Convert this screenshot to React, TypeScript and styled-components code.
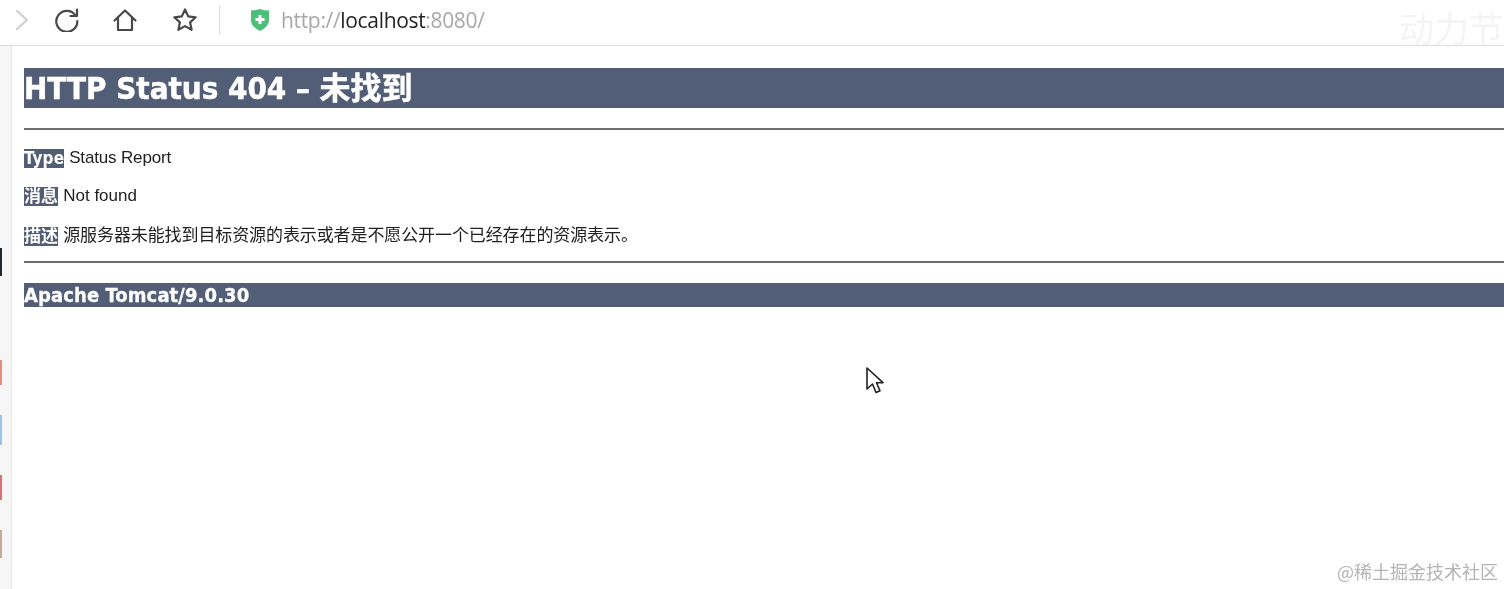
import React from 'react';
import styled, { createGlobalStyle } from 'styled-components';

const CJK = '"Noto Sans CJK SC"';
const HEADING = `"DejaVu Sans", ${CJK}, sans-serif`;

const GlobalStyle = createGlobalStyle`
  html, body {
    margin: 0;
    height: 100%;
    background: #fff;
    overflow: hidden;
  }
`;

// the reference is a video frame, everything in it is a little soft
const Page = styled.div`
  position: relative;
  display: flex;
  flex-direction: column;
  width: 1504px;
  height: 589px;
  overflow: hidden;
  filter: blur(0.4px);
`;

const Toolbar = styled.header`
  display: flex;
  align-items: center;
  flex: none;
  height: 46px;
  box-sizing: border-box;
  border-bottom: 1px solid #dcdcdc;
  padding: 0 0 6px 14px;
`;

const ToolButton = styled.span<{ $gap: number }>`
  display: flex;
  margin-right: ${(p) => p.$gap}px;
`;

const Separator = styled.span`
  width: 1px;
  height: 28px;
  margin: 0 30px 0 21px;
  background: #d8d8d8;
`;

const Url = styled.div`
  margin-left: 11px;
  font: 21px/28px "Open Sans", sans-serif;
  letter-spacing: -0.33px;
  color: #a8a8a8;
`;

const Host = styled.span`
  color: #222;
`;

const Body = styled.div`
  display: flex;
  flex: 1;
  min-height: 0;
`;

const Sidebar = styled.aside`
  display: flex;
  flex-direction: column;
  flex: none;
  width: 12px;
  box-sizing: border-box;
  padding-top: 202px;
  background: #f6f6f6;
  border-right: 1px solid #e6e6e6;
`;

const SideMark = styled.i<{ $color: string; $height: number; $gap: number }>`
  width: 2px;
  height: ${(p) => p.$height}px;
  margin-bottom: ${(p) => p.$gap}px;
  background: ${(p) => p.$color};
`;

const Main = styled.main`
  flex: 1;
  min-width: 0;
  padding: 22px 0 0 12px;
`;

const Title = styled.h1`
  margin: 0;
  height: 40px;
  background: #525d76;
  color: #fff;
  font: bold 31px/41px ${HEADING};
  font-stretch: condensed;
  -webkit-text-stroke: 0.5px #fff;
  white-space: nowrap;
`;

const Rule = styled.hr<{ $top: number; $bottom: number }>`
  height: 2px;
  margin: ${(p) => p.$top}px 0 ${(p) => p.$bottom}px;
  border: 0;
  background: #6f6f6f;
`;

const Line = styled.p<{ $bottom?: number; $spacing?: number }>`
  display: flex;
  align-items: center;
  gap: 5px;
  height: 20px;
  margin: 0 0 ${(p) => p.$bottom ?? 0}px;
  color: #222;
  font: 17px/20px "Liberation Sans", ${CJK}, sans-serif;
  letter-spacing: ${(p) => p.$spacing ?? 0}px;
  white-space: nowrap;
`;

const Tag = styled.b`
  background: #525d76;
  color: #fff;
  font: bold 17px/19px ${HEADING};
  font-stretch: condensed;
  letter-spacing: 0.1px;
`;

const Footer = styled.h3`
  margin: 0;
  height: 24px;
  background: #525d76;
  color: #fff;
  font: bold 20px/25px "DejaVu Sans", sans-serif;
  font-stretch: condensed;
  -webkit-text-stroke: 0.3px #fff;
  letter-spacing: 0.1px;
  white-space: nowrap;
`;

const Watermark = styled.div`
  position: absolute;
  right: 6px;
  bottom: 6px;
  color: #b4b4b4;
  font: 18px/24px ${CJK}, sans-serif;
`;

const CornerMark = styled.div`
  position: absolute;
  top: 7px;
  right: 0;
  color: #f4f4f4;
  font: 35px/40px ${CJK}, sans-serif;
  white-space: nowrap;
`;

const Pointer = styled.svg`
  position: absolute;
  left: 865px;
  top: 366px;
`;

const iconProps = {
  fill: 'none',
  stroke: '#484848',
  strokeWidth: 2.2,
  strokeLinecap: 'round' as const,
  strokeLinejoin: 'round' as const,
};

const marks = [
  { color: '#1d2a33', height: 28, gap: 84 },
  { color: '#e78a80', height: 25, gap: 30 },
  { color: '#9cc3e6', height: 30, gap: 30 },
  { color: '#dc6f76', height: 25, gap: 30 },
  { color: '#c9ab8f', height: 28, gap: 0 },
];

const App = () => (
  <Page>
    <GlobalStyle />
    <Toolbar>
      <ToolButton $gap={24}>
        <svg width="16" height="26" viewBox="0 0 16 26" {...iconProps} stroke="#cfcfcf">
          <path d="M3 4l10 9-10 9" />
        </svg>
      </ToolButton>
      <ToolButton $gap={33}>
        <svg width="25" height="25" viewBox="0 0 25 25" {...iconProps}>
          <path d="M21.5 8.500A10.500 10.500 0 1 0 23.300 14" />
          <path d="M23 2.500v6.500h-6.500" />
        </svg>
      </ToolButton>
      <ToolButton $gap={34}>
        <svg width="26" height="26" viewBox="0 0 26 26" {...iconProps}>
          <path d="M2.500 13.500L13 3.500l10.500 10" />
          <path d="M6 11v12h14V11" />
        </svg>
      </ToolButton>
      <ToolButton $gap={0}>
        <svg width="26" height="26" viewBox="0 0 26 26" {...iconProps}>
          <path d="M13 2.500l3.200 6.900 7.500.9-5.600 5.100 1.500 7.400L13 19.100l-6.600 3.700 1.500-7.400-5.600-5.100 7.500-.9z" />
        </svg>
      </ToolButton>
      <Separator />
      <svg width="20" height="24" viewBox="0 0 20 24">
        <path d="M1 2.500C4 2.500 7 2 10 1c3 1 6 1.500 9 1.500V12c0 5-4 8.500-9 11-5-2.500-9-6-9-11z" fill="#4cc07a" />
        <path d="M10 7v9M5.500 11.500h9" stroke="#fff" strokeWidth="3" />
      </svg>
      <Url>
        http://<Host>localhost</Host>:8080/
      </Url>
    </Toolbar>
    <Body>
      <Sidebar>
        {marks.map((m) => (
          <SideMark key={m.color} $color={m.color} $height={m.height} $gap={m.gap} />
        ))}
      </Sidebar>
      <Main>
        <Title>HTTP Status 404 – 未找到</Title>
        <Rule $top={20} $bottom={18} />
        <Line $bottom={18} $spacing={-0.15}>
          <Tag>Type</Tag> Status Report
        </Line>
        <Line $bottom={20}>
          <Tag>消息</Tag> Not found
        </Line>
        <Line $spacing={-0.1}>
          <Tag>描述</Tag> 源服务器未能找到目标资源的表示或者是不愿公开一个已经存在的资源表示。
        </Line>
        <Rule $top={15} $bottom={20} />
        <Footer>Apache Tomcat/9.0.30</Footer>
      </Main>
    </Body>
    <CornerMark>动力节</CornerMark>
    <Watermark>@稀土掘金技术社区</Watermark>
    <Pointer width="20" height="30" viewBox="0 0 20 30">
      <path d="M2 2v21l5.500-5 3.500 8.500 4-1.800-3.500-8h6.500z" fill="#fff" stroke="#222" strokeWidth="1.600" strokeLinejoin="round" />
    </Pointer>
  </Page>
);

export default App;
